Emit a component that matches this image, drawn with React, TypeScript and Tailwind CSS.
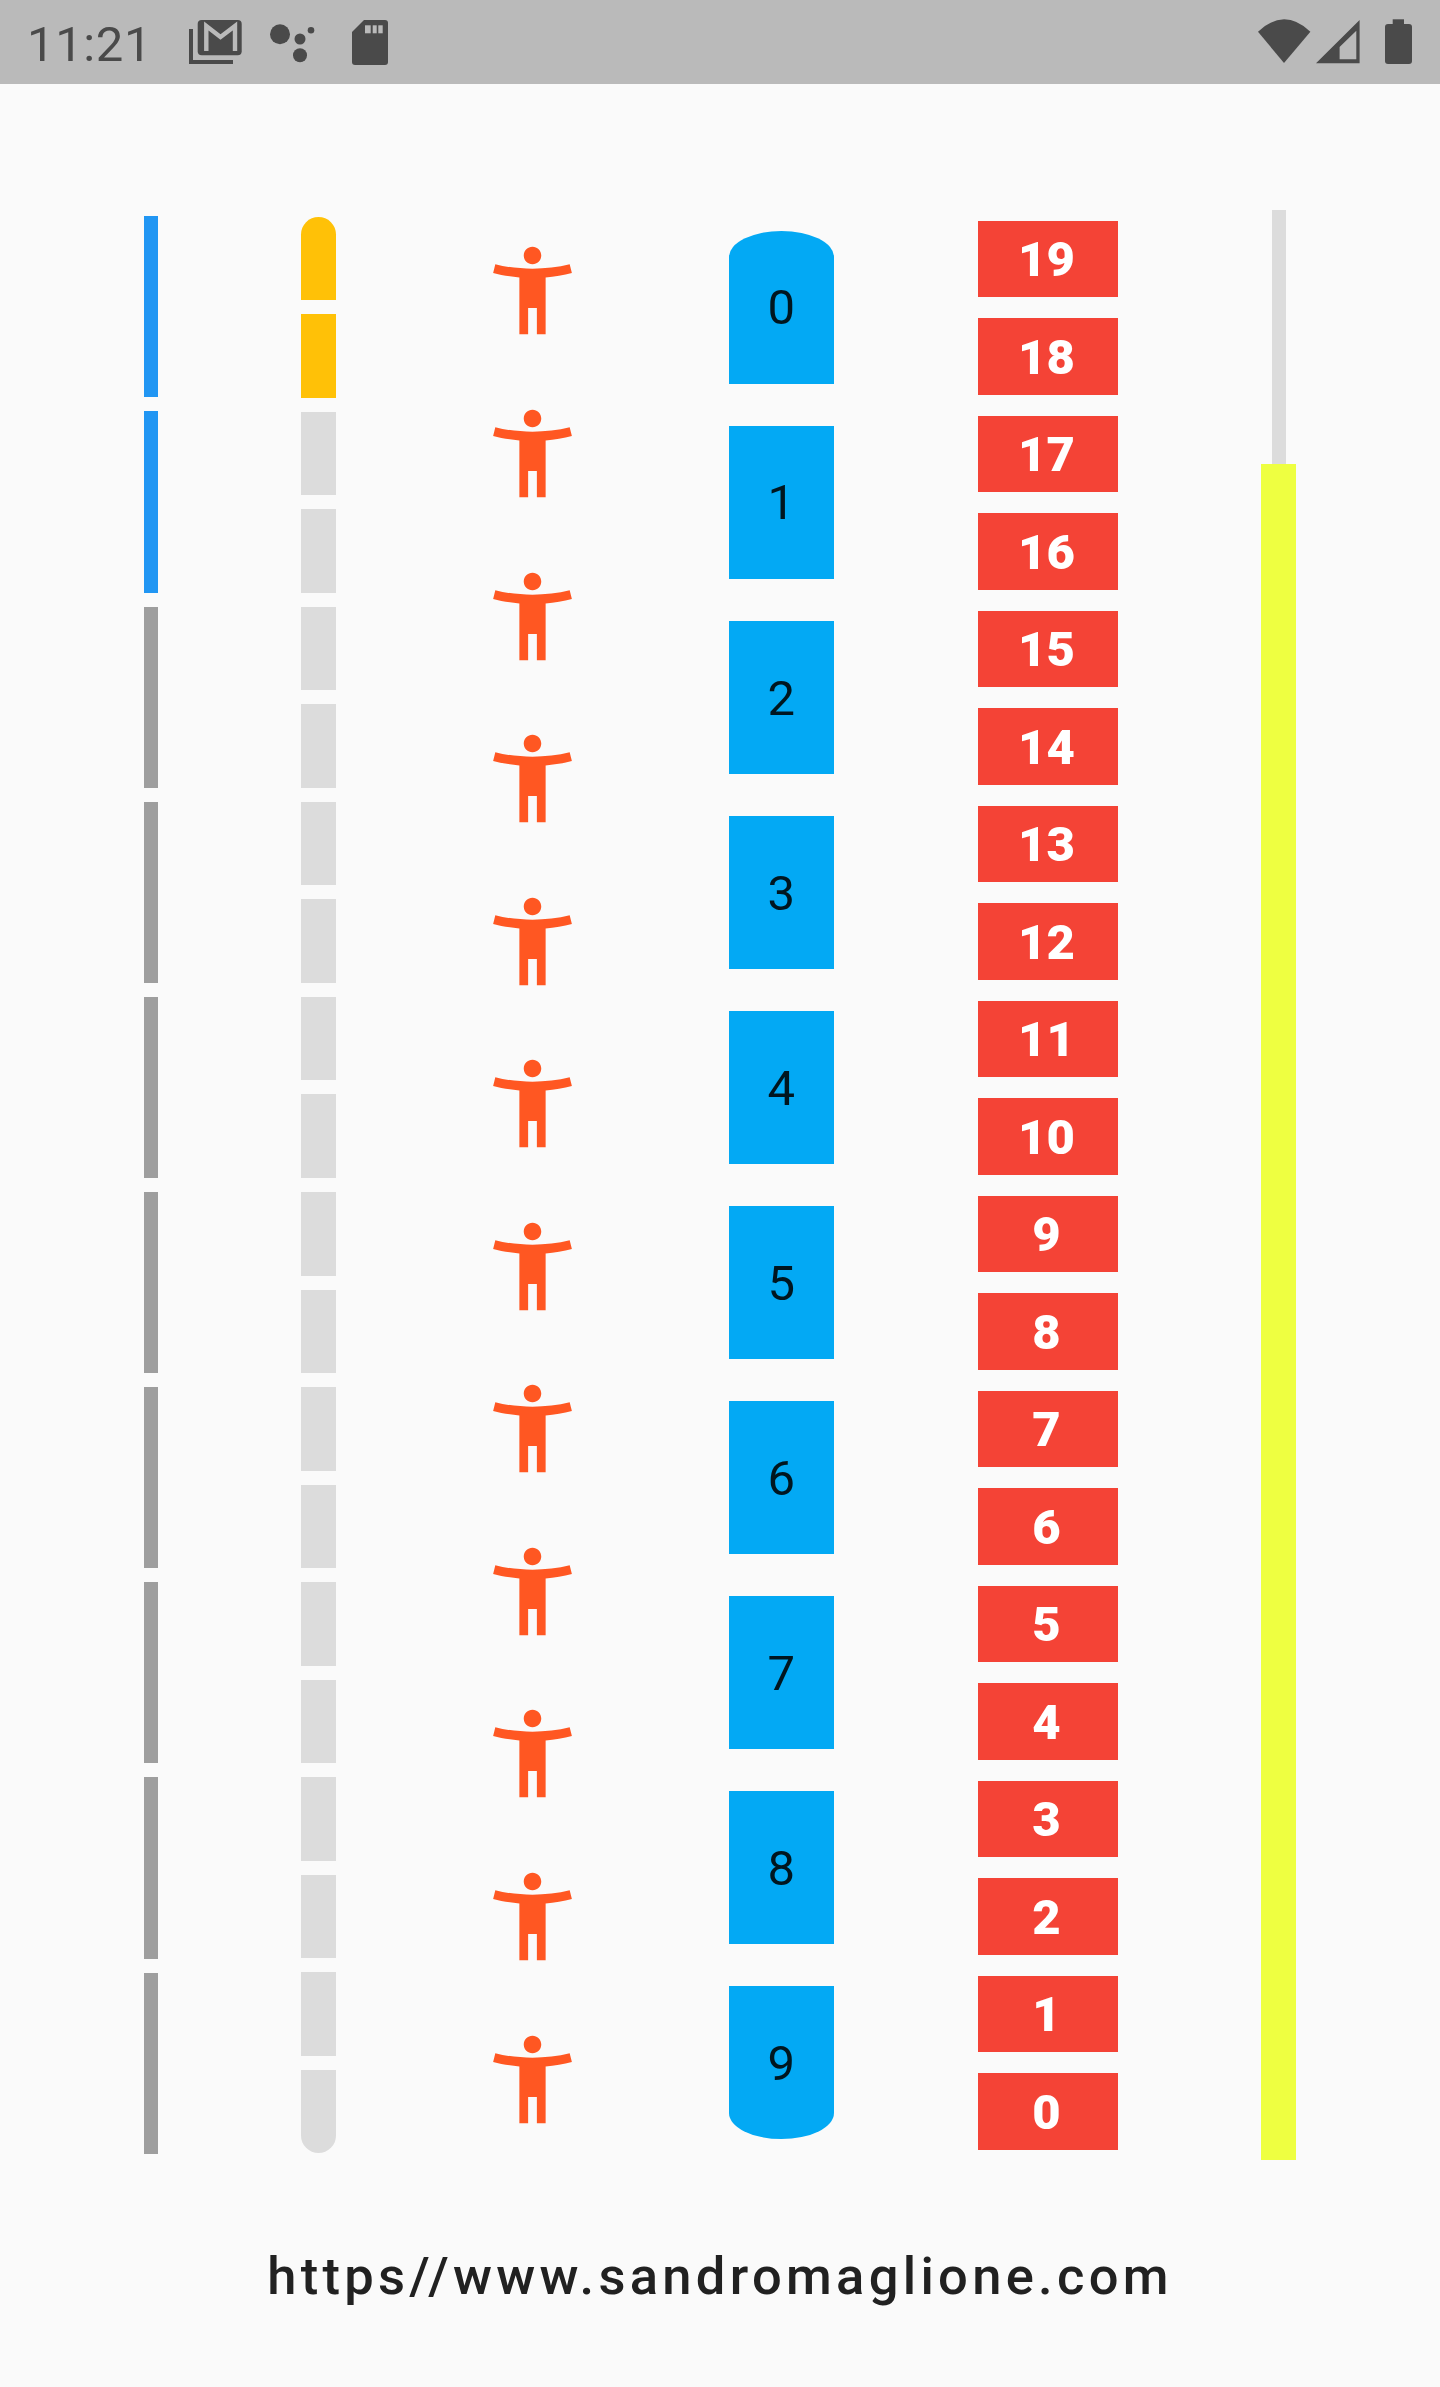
const font = { fontFamily: "Roboto, sans-serif" };

const tenSegments = Array.from({ length: 10 }, (_, i) => i);
const twentySegments = Array.from({ length: 20 }, (_, i) => i);
const figures = Array.from({ length: 12 }, (_, i) => i);

function GmailIcon() {
  return (
    <svg width="53" height="46" viewBox="0 0 53 46" className="shrink-0">
      <polyline points="2,10 2,43 44,43" fill="none" stroke="#4a4a4a" strokeWidth="4" />
      <rect x="8.7" y="1" width="44" height="35.3" rx="4" fill="#4a4a4a" />
      <polyline
        points="17.3,32 17.3,7 31.5,18 46,7 46,32"
        fill="none"
        stroke="#bababa"
        strokeWidth="4.4"
      />
    </svg>
  );
}

function AssistantIcon() {
  return (
    <svg width="45" height="46" viewBox="0 0 45 46" className="shrink-0" fill="#4a4a4a">
      <circle cx="10" cy="15.3" r="10" />
      <circle cx="30" cy="20" r="5.5" />
      <circle cx="30" cy="36.3" r="7" />
      <circle cx="41" cy="11.3" r="3.3" />
    </svg>
  );
}

function SdCardIcon() {
  return (
    <svg width="36" height="46" viewBox="0 0 36 46" className="shrink-0">
      <path
        d="M12 1h21a3 3 0 0 1 3 3v39a3 3 0 0 1-3 3H3a3 3 0 0 1-3-3V13z"
        fill="#4a4a4a"
      />
      <rect x="13" y="6.3" width="5.7" height="8" fill="#bababa" />
      <rect x="20.7" y="6.3" width="4" height="8" fill="#bababa" />
      <rect x="26.3" y="6.3" width="4.4" height="8" fill="#bababa" />
    </svg>
  );
}

function WifiIcon() {
  return (
    <svg width="53" height="46" viewBox="0 0 53 46" className="shrink-0">
      <path d="M26 44 0 12.7Q26-12 52.4 12.7z" fill="#4a4a4a" />
    </svg>
  );
}

function SignalIcon() {
  return (
    <svg width="44" height="46" viewBox="0 0 44 46" className="shrink-0">
      <path
        fillRule="evenodd"
        d="M0 44.3 43.6 1v43.3zM23.6 40.3H40.3V11.7L23.6 28z"
        fill="#4a4a4a"
      />
    </svg>
  );
}

function BatteryIcon() {
  return (
    <svg width="27" height="46" viewBox="0 0 27 46" className="shrink-0" fill="#4a4a4a">
      <rect x="7.7" y="0.3" width="11.3" height="6" />
      <rect x="0" y="5" width="27" height="40" rx="3" />
    </svg>
  );
}

function StatusBar() {
  return (
    <div className="flex h-[84px] items-center justify-between bg-[#bababa] pl-[27px] pr-[28px]">
      <div className="flex items-center">
        <span
          className="mr-[36.5px] mt-[4px] text-[49px] leading-none tracking-[0.6px] text-[#4a4a4a]"
          style={font}
        >
          11:21
        </span>
        <GmailIcon />
        <div className="ml-[28px]">
          <AssistantIcon />
        </div>
        <div className="ml-[37px]">
          <SdCardIcon />
        </div>
      </div>
      <div className="flex items-center">
        <WifiIcon />
        <div className="ml-[4.5px]">
          <SignalIcon />
        </div>
        <div className="ml-[25.5px]">
          <BatteryIcon />
        </div>
      </div>
    </div>
  );
}

function Figure() {
  return (
    <svg width="105" height="105" viewBox="0 0 24 24" fill="#ff5722" className="block">
      <path d="M20.5 6c-2.61.7-5.67 1-8.5 1s-5.89-.3-8.5-1L3 8c1.86.5 4 .83 6 1v13h2v-6h2v6h2V9c2-.17 4.14-.5 6-1l-.5-2zM12 6c1.1 0 2-.9 2-2s-.9-2-2-2-2 .9-2 2 .9 2 2 2z" />
    </svg>
  );
}

export default function App() {
  return (
    <div className="h-[2387px] w-full overflow-hidden bg-[#fafafa]" style={font}>
      <StatusBar />
      <main className="box-border flex h-[2166px] items-center justify-evenly pt-[36px]">
        {/* thin segments, first two done */}
        <div className="flex w-[14px] flex-col gap-[14px]">
          {tenSegments.map((i) => (
            <div
              key={i}
              className={`h-[181.15px] ${i < 2 ? "bg-[#2196f3]" : "bg-[#9e9e9e]"}`}
            />
          ))}
        </div>

        {/* rounded steps */}
        <div className="flex w-[35px] flex-col gap-[14px]">
          {twentySegments.map((i) => (
            <div
              key={i}
              className={`h-[83.55px] ${i < 2 ? "bg-[#ffc107]" : "bg-[#dcdcdc]"} ${
                i === 0 ? "rounded-t-[18px]" : ""
              } ${i === 19 ? "rounded-b-[18px]" : ""}`}
            />
          ))}
        </div>

        {/* people */}
        <div className="flex w-[105px] flex-col gap-[57.55px]">
          {figures.map((i) => (
            <Figure key={i} />
          ))}
        </div>

        {/* numbered blue blocks */}
        <div className="flex w-[105px] flex-col gap-[42.1px]">
          {tenSegments.map((i) => (
            <div
              key={i}
              className={`flex h-[153px] items-center justify-center bg-[#03a9f4] pt-[2px] text-[49px] text-black/87 ${
                i === 0 ? "rounded-tl-[52.5px_26px] rounded-tr-[52.5px_26px]" : ""
              } ${i === 9 ? "rounded-bl-[52.5px_26px] rounded-br-[52.5px_26px]" : ""}`}
            >
              {i}
            </div>
          ))}
        </div>

        {/* countdown blocks */}
        <div className="flex w-[140px] flex-col gap-[21px]">
          {twentySegments.map((i) => (
            <div
              key={i}
              className="flex h-[76.5px] items-center justify-center bg-[#f44336] pr-[2px] pt-[2px] text-[49px] font-black text-white"
            >
              {19 - i}
            </div>
          ))}
        </div>

        {/* progress with thick value */}
        <div className="flex h-[1950px] w-[35px] flex-col items-center">
          <div className="h-[254px] w-[14px] bg-[#dcdcdc]" />
          <div className="h-[1696px] w-full bg-[#eeff41]" />
        </div>
      </main>
      <footer className="text-center text-[52.5px] font-medium leading-none tracking-[4.3px] text-[#212121]">
        https//www.sandromaglione.com
      </footer>
    </div>
  );
}
